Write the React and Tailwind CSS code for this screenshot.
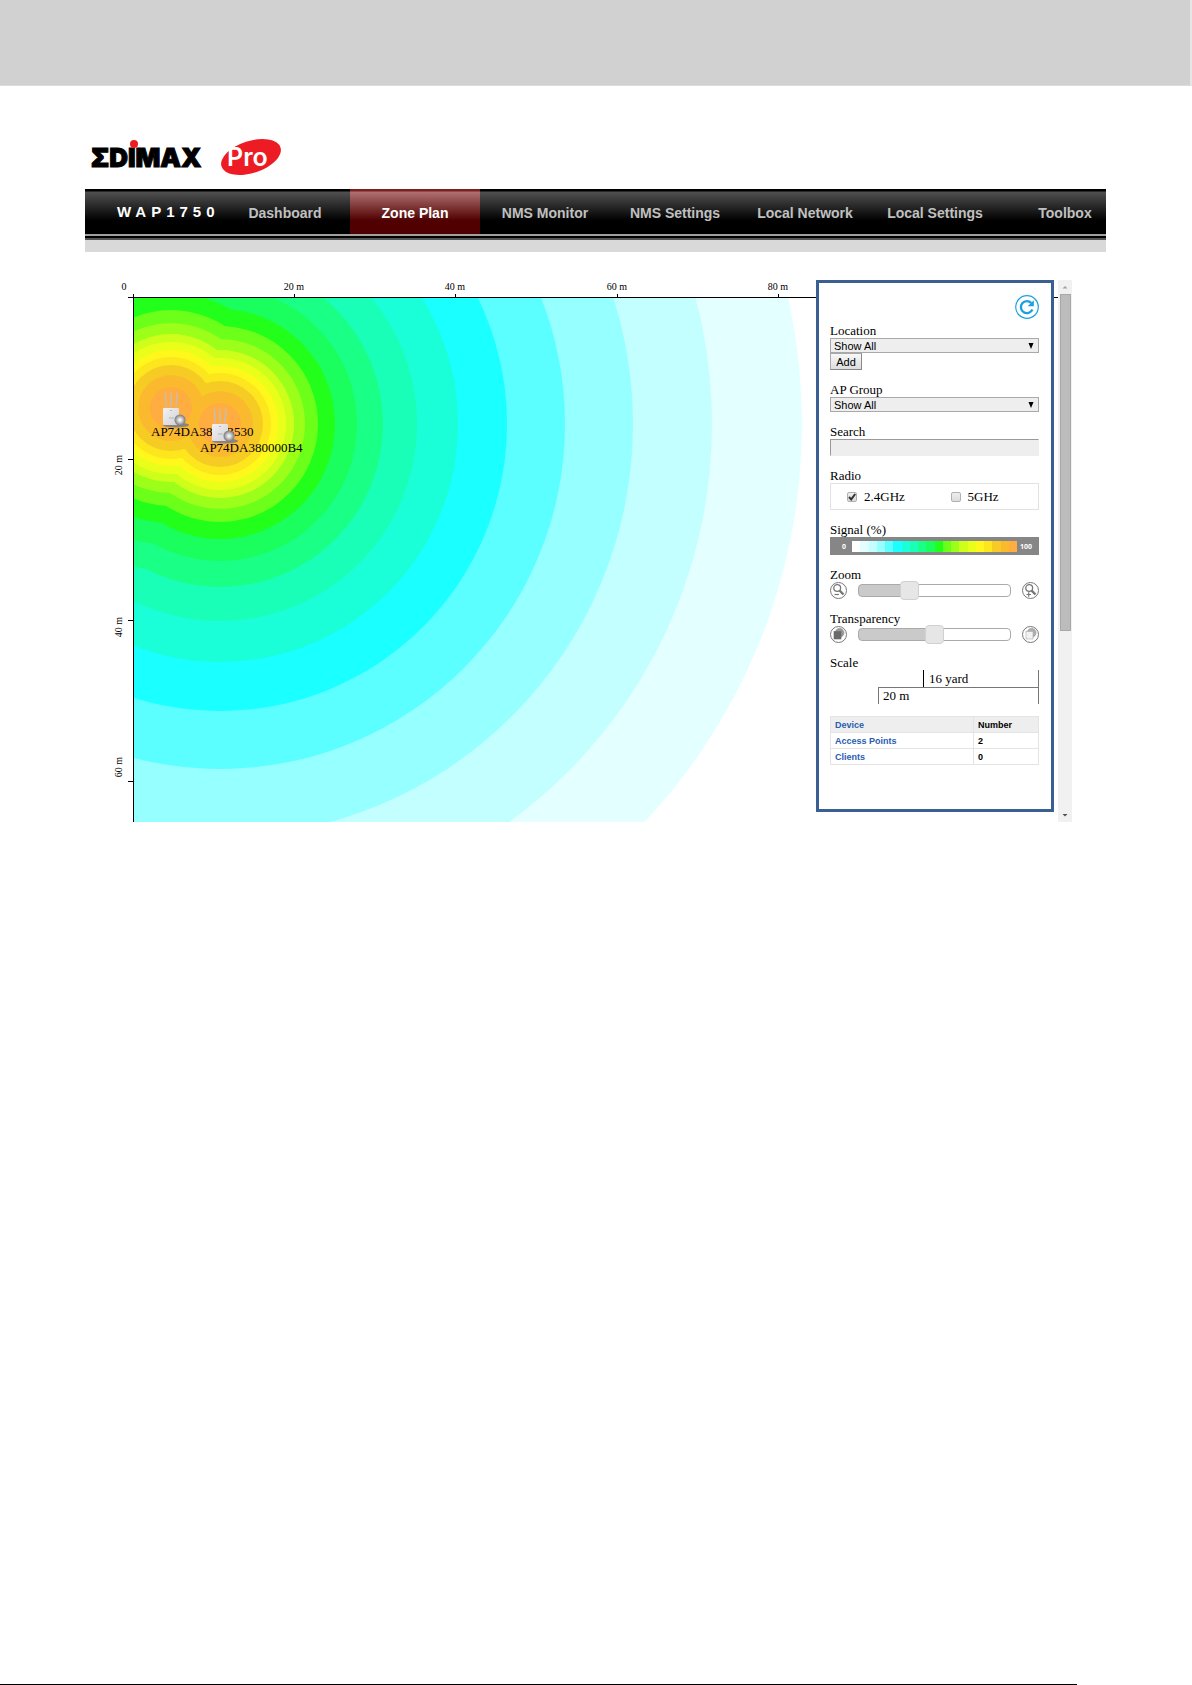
import { useId, useState } from "react";
import clsx from "clsx";

const NAV_ITEMS = [
  "Dashboard",
  "Zone Plan",
  "NMS Monitor",
  "NMS Settings",
  "Local Network",
  "Local Settings",
  "Toolbox",
];

// strongest signal first, radius in map pixels
const RINGS = [
  { r: 21, color: "#ffac40" },
  { r: 33, color: "#fbba2d" },
  { r: 43, color: "#f6cb24" },
  { r: 51, color: "#fde61e" },
  { r: 58, color: "#fff81a" },
  { r: 66, color: "#e9ff1a" },
  { r: 74, color: "#ceff1a" },
  { r: 85, color: "#9bff1a" },
  { r: 98, color: "#6bff1a" },
  { r: 115, color: "#22ff1a" },
  { r: 137, color: "#1aff5e" },
  { r: 163, color: "#1aff86" },
  { r: 197, color: "#1affb8" },
  { r: 238, color: "#1affd8" },
  { r: 287, color: "#1affff" },
  { r: 345, color: "#5cffff" },
  { r: 413, color: "#96ffff" },
  { r: 492, color: "#c4ffff" },
  { r: 582, color: "#e4ffff" },
];

const LEGEND = ["#ffffff", ...RINGS.map((ring) => ring.color).reverse()];

const ACCESS_POINTS = [
  { name: "AP74DA3800B530", x: 60, y: 128 },
  { name: "AP74DA380000B4", x: 109, y: 144 },
];

const X_TICKS = [
  { x: 183, label: "20 m" },
  { x: 344, label: "40 m" },
  { x: 506, label: "60 m" },
  { x: 667, label: "80 m" },
];

const Y_TICKS = [
  { y: 179, labelY: 185, label: "20 m" },
  { y: 340, labelY: 347, label: "40 m" },
  { y: 501, labelY: 487, label: "60 m" },
];

function Logo() {
  return (
    <svg width="192" height="40" viewBox="0 0 192 40" role="img" aria-label="Edimax Pro">
      <text
        x="0"
        y="30"
        fontFamily="Inter, sans-serif"
        fontWeight="900"
        fontSize="26"
        fill="#000"
        stroke="#000"
        strokeWidth="1"
      >
        ΣDIMAX
      </text>
      <circle cx="43" cy="7" r="4" fill="#ed1c24" />
      <ellipse cx="160" cy="20" rx="31" ry="16" fill="#ed1c24" transform="rotate(-18 160 20)" />
      <text
        x="136"
        y="29"
        fontFamily="Inter, sans-serif"
        fontWeight="600"
        fontSize="25"
        fill="#fff"
      >
        Pro
      </text>
    </svg>
  );
}

function NavBar() {
  const [active, setActive] = useState("Zone Plan");

  return (
    <div>
      <nav className="flex h-[45px] overflow-hidden bg-[linear-gradient(#000_2px,#505050_3px,#000_70%)] font-['Liberation_Sans',sans-serif]">
        <div className="w-[135px] shrink-0 pt-[11px] pl-8 text-[15px] leading-6 font-bold tracking-[5px] whitespace-nowrap text-white">
          WAP1750
        </div>
        {NAV_ITEMS.map((item) => (
          <button
            key={item}
            type="button"
            onClick={() => setActive(item)}
            className={clsx(
              "w-[130px] shrink-0 pt-1 text-center text-[14px] font-bold",
              item === active
                ? "bg-[linear-gradient(#7a2020_2px,#b07070_3px,#500000_70%)] text-white"
                : "text-[#c0c0c0]"
            )}
          >
            {item}
          </button>
        ))}
      </nav>
      <div className="h-0.5 bg-[#a0a0a0]" />
      <div className="h-0.5 bg-black" />
      <div className="h-0.5 bg-[#555]" />
      <div className="h-3 bg-[#d9d9d9]" />
    </div>
  );
}

function AccessPointIcon({ x, y }) {
  return (
    <g transform={`translate(${x} ${y})`}>
      <path d="M-5 -1L-5.5 -15M0 -1V-15M5 -1L6 -15" stroke="#c9bdb2" strokeWidth="1.5" />
      <ellipse cx="5" cy="17" rx="13" ry="2.5" fill="#8a8580" />
      <rect x="-8" y="0" width="16" height="17" rx="1" fill="url(#apBody)" />
      <path d="M-2 10H3M-1 2.5H1" stroke="#b5b5b5" />
      <circle cx="9" cy="12" r="5.5" fill="url(#apLed)" />
    </g>
  );
}

function ZoneMap() {
  return (
    <svg className="col-start-1 row-start-1 h-[542px] w-full font-['Liberation_Serif',serif]">
      <defs>
        <clipPath id="plot">
          <rect x="22" y="17" width="100%" height="525" />
        </clipPath>
        <linearGradient id="apBody" x1="0" y1="0" x2="1" y2="1">
          <stop offset="0" stopColor="#f2f2f4" />
          <stop offset="1" stopColor="#d2d2d6" />
        </linearGradient>
        <radialGradient id="apLed">
          <stop offset="0" stopColor="#fff" />
          <stop offset="0.4" stopColor="#d0d0d0" />
          <stop offset="1" stopColor="#777" />
        </radialGradient>
      </defs>

      <g clipPath="url(#plot)">
        {[...RINGS].reverse().map((ring) => (
          <g key={ring.r} fill={ring.color}>
            {ACCESS_POINTS.map((ap) => (
              <circle key={ap.name} cx={ap.x} cy={ap.y} r={ring.r} />
            ))}
          </g>
        ))}
      </g>

      <g fill="#000" shapeRendering="crispEdges">
        <rect x="17" y="17" width="100%" height="1" />
        <rect x="22" y="14" width="1" height="528" />
        {X_TICKS.map((t) => (
          <rect key={t.x} x={t.x} y="14" width="1" height="3" />
        ))}
        {Y_TICKS.map((t) => (
          <rect key={t.y} x="17" y={t.y} width="5" height="1" />
        ))}
      </g>

      <g fontSize="10" textAnchor="middle">
        <text x="13" y="10">0</text>
        {X_TICKS.map((t) => (
          <text key={t.x} x={t.x} y="10">{t.label}</text>
        ))}
        {Y_TICKS.map((t) => (
          <text key={t.y} transform={`translate(11 ${t.labelY}) rotate(-90)`}>{t.label}</text>
        ))}
      </g>

      {ACCESS_POINTS.map((ap) => (
        <g key={ap.name}>
          <text x={ap.x - 20} y={ap.y + 28} fontSize="13">{ap.name}</text>
          <AccessPointIcon x={ap.x} y={ap.y} />
        </g>
      ))}
    </svg>
  );
}

function SelectField({ label }) {
  const id = useId();
  return (
    <div>
      <label htmlFor={id} className="block">{label}</label>
      <div className="grid items-center">
        <select
          id={id}
          className="col-start-1 row-start-1 h-[15px] w-full appearance-none border border-[#a9a9a9] bg-[#eee] pl-[3px] font-['Liberation_Sans',sans-serif] text-[11px] leading-3"
        >
          <option>Show All</option>
        </select>
        <svg viewBox="0 0 6 6" className="pointer-events-none col-start-1 row-start-1 mr-[5px] size-1.5 justify-self-end">
          <path d="M0.5 0H5.5L3 6Z" fill="#000" />
        </svg>
      </div>
    </div>
  );
}

function RadioBand({ label, defaultChecked }) {
  return (
    <label className="flex flex-1 items-center gap-[7px] pl-4">
      <span className="grid">
        <input
          type="checkbox"
          defaultChecked={defaultChecked}
          className="peer col-start-1 row-start-1 size-2.5 appearance-none rounded-xs border border-[#b0b0b0] bg-[linear-gradient(#eee,#dcdcdc)]"
        />
        <svg viewBox="0 0 10 10" className="pointer-events-none invisible col-start-1 row-start-1 size-2.5 peer-checked:visible">
          <path d="M2 5L4.2 7.4L8.2 2" fill="none" stroke="#333" strokeWidth="2" />
        </svg>
      </span>
      {label}
    </label>
  );
}

function SliderField({ label, initial, before, after }) {
  const id = useId();
  const [value, setValue] = useState(initial);
  return (
    <div>
      <label htmlFor={id} className="block">{label}</label>
      <div className="flex h-[17px] items-center">
        {before}
        <input
          id={id}
          type="range"
          min="0"
          max="100"
          value={value}
          onChange={(e) => setValue(Number(e.target.value))}
          style={{ "--fill": `${value}%` }}
          className="mx-[11px] h-[19px] min-w-0 flex-1 appearance-none bg-transparent [&::-webkit-slider-runnable-track]:h-[13px] [&::-webkit-slider-runnable-track]:rounded [&::-webkit-slider-runnable-track]:border [&::-webkit-slider-runnable-track]:border-[#aaa] [&::-webkit-slider-runnable-track]:bg-[linear-gradient(to_right,#cacaca_var(--fill),#fff_var(--fill))] [&::-webkit-slider-thumb]:-mt-1 [&::-webkit-slider-thumb]:size-[19px] [&::-webkit-slider-thumb]:appearance-none [&::-webkit-slider-thumb]:rounded [&::-webkit-slider-thumb]:border [&::-webkit-slider-thumb]:border-[#d0d0d0] [&::-webkit-slider-thumb]:bg-[#e6e6e6]"
        />
        {after}
      </div>
    </div>
  );
}

function MagnifierIcon({ plus }) {
  return (
    <svg viewBox="0 0 17 17" className="size-[17px] shrink-0" fill="none" stroke="#777">
      <circle cx="8.5" cy="8.5" r="8" />
      <circle cx="7.2" cy="6" r="3.4" strokeWidth="1.3" />
      <path d="M9.5 8.5L13.5 12.5" strokeWidth="2.4" />
      <path d={plus ? "M4.5 12.5H9M6.7 10.3V14.7" : "M4.5 12.5H9"} strokeWidth="1.2" />
    </svg>
  );
}

function OpacityIcon({ solid }) {
  return (
    <svg viewBox="0 0 17 17" className="size-[17px] shrink-0">
      <circle cx="8.5" cy="8.5" r="8" fill="#fff" stroke="#777" />
      <circle cx="9.6" cy="6.8" r="4.4" fill={solid ? "#999" : "#b0b0b0"} stroke="#888" strokeWidth="0.6" />
      <rect x="4" y="5.5" width="7" height="7.5" fill={solid ? "#6a6a6a" : "#f2f2f2"} stroke={solid ? "#6a6a6a" : "#aaa"} strokeWidth="0.6" />
    </svg>
  );
}

function SignalLegend() {
  return (
    <div>
      <div>Signal (%)</div>
      <div className="flex h-[18px] items-center bg-[#868686] font-['Open_Sans',sans-serif] text-[7px] font-bold text-white">
        <span className="w-[22px] pl-1.5 text-center">0</span>
        <div className="flex h-[11px] flex-1">
          {LEGEND.map((color) => (
            <span key={color} className="flex-1" style={{ backgroundColor: color }} />
          ))}
        </div>
        <span className="w-[22px] pl-[3px]">100</span>
      </div>
    </div>
  );
}

function ScaleBars() {
  return (
    <div>
      <div>Scale</div>
      <div className="flex flex-col items-end leading-4">
        <div className="w-[116px] border-x border-r-[#777] border-l-black pt-px pl-[5px]">
          16 yard
        </div>
        <div className="w-[161px] border-x border-t border-[#777] pl-1">
          20 m
        </div>
      </div>
    </div>
  );
}

function DeviceTable() {
  const cell = "h-4 border border-[#e4e4e4] px-1 text-left leading-3 font-bold";
  return (
    <table className="w-full table-fixed border-collapse font-['Liberation_Sans',sans-serif] text-[9px]">
      <colgroup>
        <col />
        <col className="w-[65px]" />
      </colgroup>
      <thead>
        <tr className="bg-[#eee]">
          <th className={clsx(cell, "text-[#2a5db0]")}>Device</th>
          <th className={cell}>Number</th>
        </tr>
      </thead>
      <tbody>
        <tr>
          <td className={cell}><a href="#aps" className="text-[#2a5db0]">Access Points</a></td>
          <td className={cell}>2</td>
        </tr>
        <tr>
          <td className={cell}><a href="#clients" className="text-[#2a5db0]">Clients</a></td>
          <td className={cell}>0</td>
        </tr>
      </tbody>
    </table>
  );
}

function ControlPanel() {
  return (
    <aside className="col-start-1 row-start-1 mr-1 mb-2.5 w-[238px] justify-self-end border-[3px] border-[#3a6093] bg-white p-3 pl-[11px] font-['Liberation_Serif',serif] text-[13px] leading-[15px] text-black">
      <div className="mb-1 flex justify-end">
        <button type="button" aria-label="Refresh">
          <svg viewBox="0 0 24 24" className="size-6" fill="none" stroke="#1ba1e2">
            <circle cx="12" cy="12" r="11.3" strokeWidth="1.2" />
            <path d="M16.3 8A6 6 0 1 0 17.4 14.5" strokeWidth="2.4" />
            <path d="M18.8 5.2V11.2H12.6Z" fill="#1ba1e2" stroke="none" />
          </svg>
        </button>
      </div>

      <div className="flex flex-col gap-3">
        <div>
          <SelectField label="Location" />
          <button
            type="button"
            className="block h-[17px] w-8 border border-[#a9a9a9] border-r-[#888] border-b-[#888] bg-[linear-gradient(#f8f8f8,#ddd)] font-['Liberation_Sans',sans-serif] text-[11px] leading-3"
          >
            Add
          </button>
        </div>

        <SelectField label="AP Group" />

        <div>
          <label htmlFor="search" className="block">Search</label>
          <input
            id="search"
            type="text"
            className="block h-[17px] w-full border border-[#eee] border-t-[#999] border-l-[#999] bg-[#eee] px-1 text-[11px]"
          />
        </div>

        <fieldset>
          <legend>Radio</legend>
          <div className="flex h-[27px] border border-[#e2e2e2]">
            <RadioBand label="2.4GHz" defaultChecked />
            <RadioBand label="5GHz" />
          </div>
        </fieldset>

        <SignalLegend />
        <SliderField label="Zoom" initial={31} before={<MagnifierIcon />} after={<MagnifierIcon plus />} />
        <SliderField label="Transparency" initial={50} before={<OpacityIcon solid />} after={<OpacityIcon />} />
        <ScaleBars />
        <DeviceTable />
      </div>
    </aside>
  );
}

function ScrollBar() {
  return (
    <div className="flex w-3.5 flex-col items-center bg-[#f1f1f1]">
      <svg viewBox="0 0 14 14" className="size-3.5 shrink-0">
        <path d="M4.5 8.5H9.5L7 6Z" fill="#a0a0a0" />
      </svg>
      <div className="h-[337px] w-[11px] border border-[#a8a8a8] bg-[#bcbcbc]" />
      <svg viewBox="0 0 14 14" className="mt-auto size-3.5 shrink-0">
        <path d="M4.5 6H9.5L7 8.5Z" fill="#505050" />
      </svg>
    </div>
  );
}

export default function App() {
  return (
    <div className="flex min-h-screen flex-col bg-white">
      <header className="h-[86px] border-r-2 border-b border-r-[#e6e6e6] border-b-[#dcdcdc] bg-[#d1d1d1]" />

      <main className="mr-[86px] ml-[85px] pt-[51px]">
        <div className="mb-3 h-10 pl-1.5">
          <Logo />
        </div>
        <NavBar />
        <div className="mt-7 mr-[34px] ml-[26px] flex">
          <div className="grid min-w-0 flex-1">
            <ZoneMap />
            <ControlPanel />
          </div>
          <ScrollBar />
        </div>
      </main>

      <div className="mt-auto mr-[115px] h-px bg-black" />
    </div>
  );
}
